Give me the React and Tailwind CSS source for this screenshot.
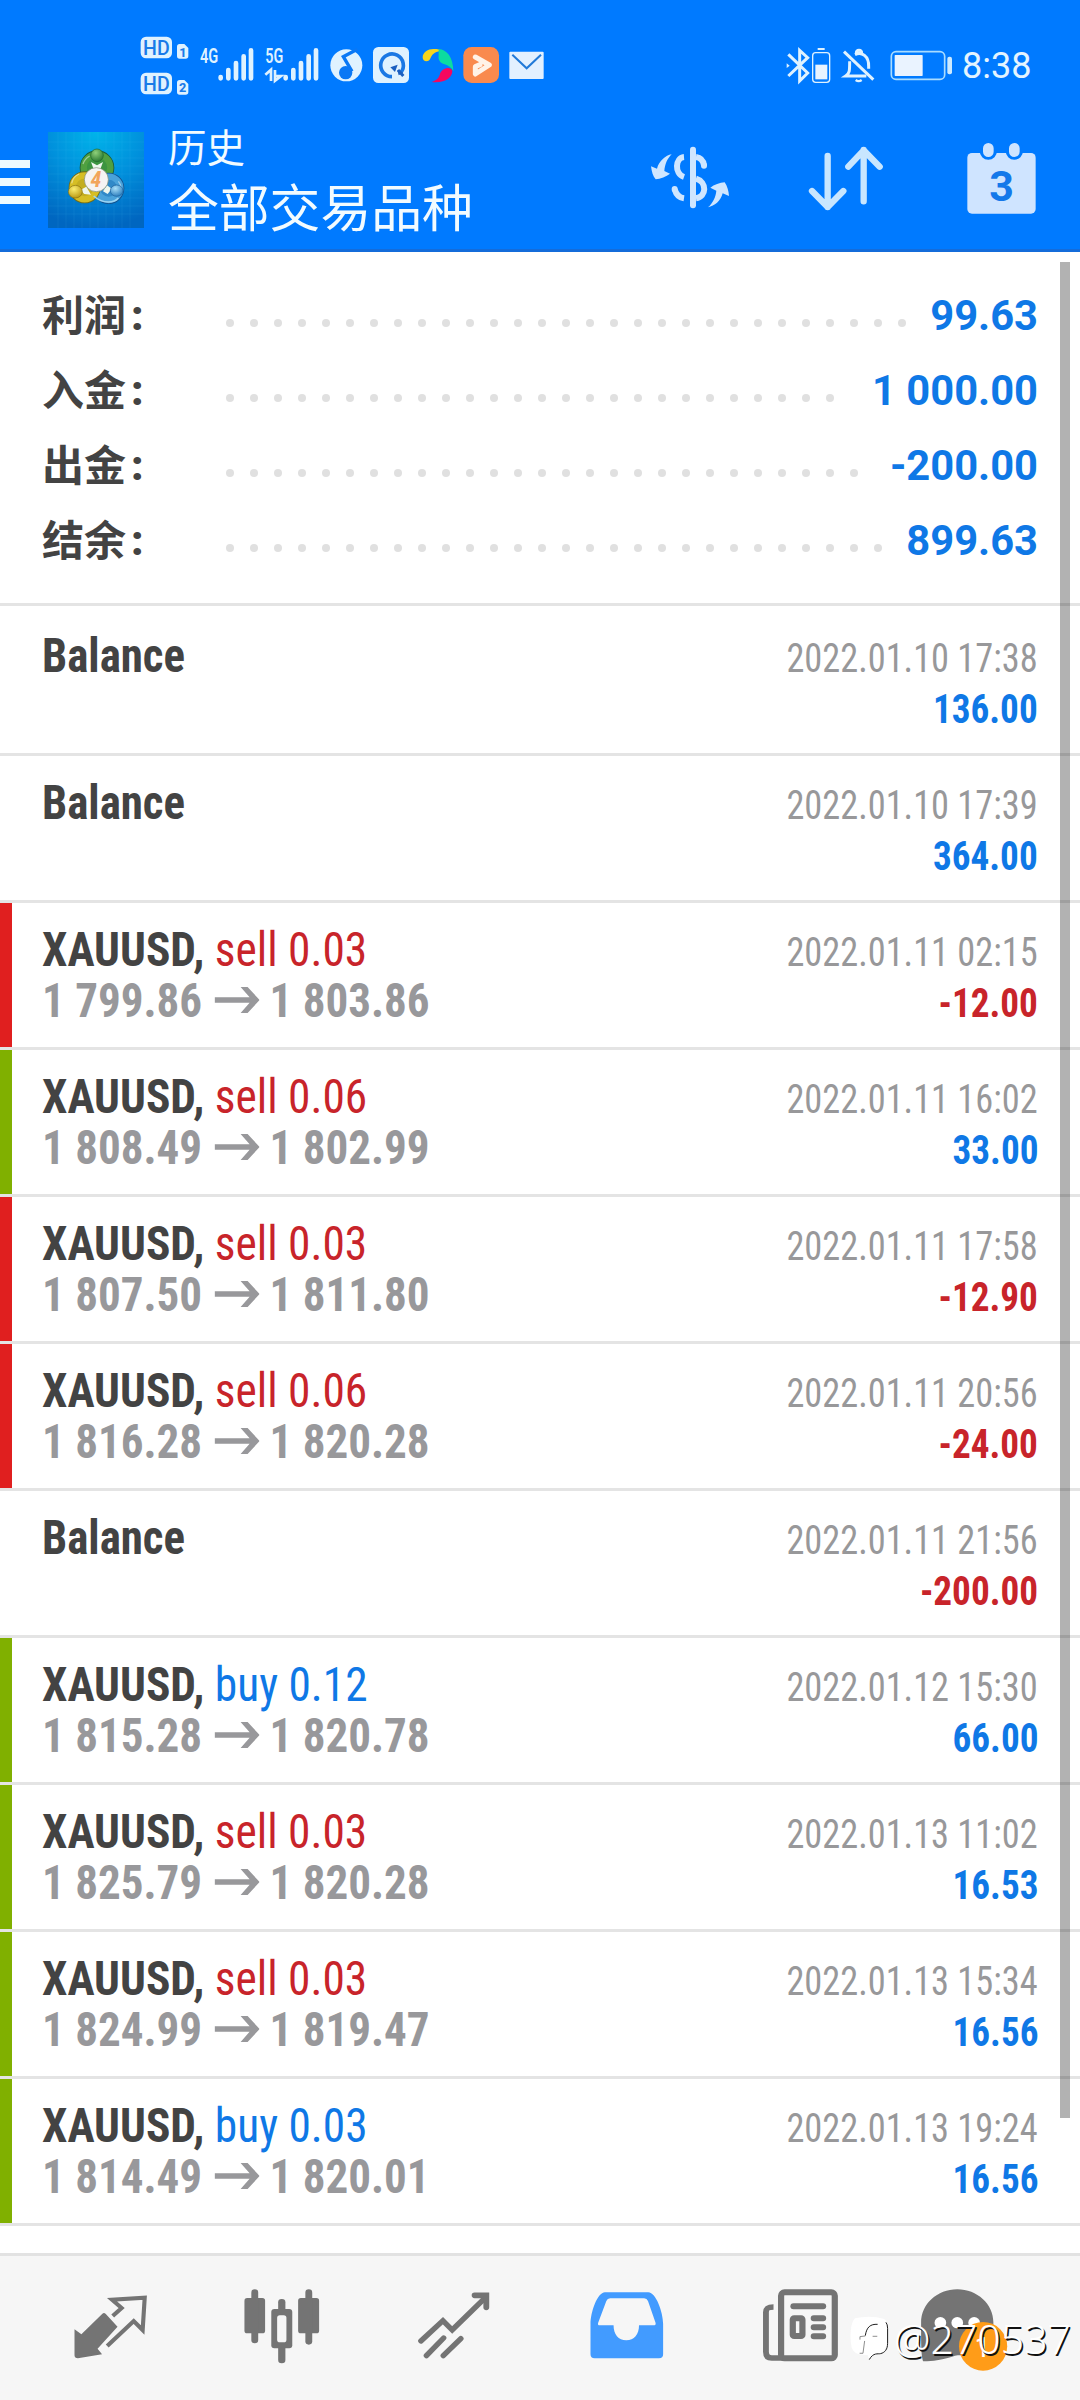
const summary = [
  { label: "利润", value: "99.63", dots: 29 },
  { label: "入金", value: "1 000.00", dots: 26 },
  { label: "出金", value: "-200.00", dots: 27 },
  { label: "结余", value: "899.63", dots: 28 },
]

const deals = [
  { date: "2022.01.10 17:38", profit: "136.00" },
  { date: "2022.01.10 17:39", profit: "364.00" },
  { type: "sell", volume: "0.03", open: "1 799.86", close: "1 803.86", date: "2022.01.11 02:15", profit: "-12.00" },
  { type: "sell", volume: "0.06", open: "1 808.49", close: "1 802.99", date: "2022.01.11 16:02", profit: "33.00" },
  { type: "sell", volume: "0.03", open: "1 807.50", close: "1 811.80", date: "2022.01.11 17:58", profit: "-12.90" },
  { type: "sell", volume: "0.06", open: "1 816.28", close: "1 820.28", date: "2022.01.11 20:56", profit: "-24.00" },
  { date: "2022.01.11 21:56", profit: "-200.00" },
  { type: "buy", volume: "0.12", open: "1 815.28", close: "1 820.78", date: "2022.01.12 15:30", profit: "66.00" },
  { type: "sell", volume: "0.03", open: "1 825.79", close: "1 820.28", date: "2022.01.13 11:02", profit: "16.53" },
  { type: "sell", volume: "0.03", open: "1 824.99", close: "1 819.47", date: "2022.01.13 15:34", profit: "16.56" },
  { type: "buy", volume: "0.03", open: "1 814.49", close: "1 820.01", date: "2022.01.13 19:24", profit: "16.56" },
]

function SignalBars({ x }) {
  return (
    <g stroke="#dff2ff" strokeWidth="14" strokeLinecap="round">
      <path d={`M${x + 7} 171v4M${x + 30} 150v25M${x + 53} 129v46M${x + 76} 109v66M${x + 98} 91v84`} />
    </g>
  )
}

function StatusIcons() {
  return (
    <svg viewBox="0 0 1320 270" className="w-[440px] h-[90px] font-['Roboto']">
      {/* HD badges, one for each SIM */}
      <g fill="#dff2ff">
        <rect x="62" y="50" width="94" height="65" rx="16" />
        <rect x="62" y="158" width="94" height="65" rx="16" />
        <path d="M171 80q0-8 8-8h14l12 12v24q0 8-8 8h-18q-8 0-8-8zM171 188q0-8 8-8h14l12 12v24q0 8-8 8h-18q-8 0-8-8z" />
      </g>
      <g fill="#1a7be8" fontWeight="500">
        <text x="69" y="105" fontSize="62" textLength="80" lengthAdjust="spacingAndGlyphs">HD</text>
        <text x="69" y="213" fontSize="62" textLength="80" lengthAdjust="spacingAndGlyphs">HD</text>
        <text x="178" y="110" fontSize="38" fontWeight="800">1</text>
        <text x="177" y="217" fontSize="38" fontWeight="800">2</text>
      </g>
      <g fill="#dff2ff" fontSize="61" fontWeight="600">
        <text x="240" y="129" textLength="55" lengthAdjust="spacingAndGlyphs">4G</text>
        <text x="436" y="129" textLength="54" lengthAdjust="spacingAndGlyphs">5G</text>
      </g>
      <SignalBars x={295} />
      <SignalBars x={490} />
      <path d="M436 164l17-15v34M465 150v32l18-14h-14" fill="none" stroke="#dff2ff" strokeWidth="8" />

      {/* music player */}
      <circle cx="679" cy="136" r="48" fill="#dff2ff" />
      <path d="M712 88l-42 22 26 44" fill="none" stroke="#0a78f5" strokeWidth="10" />
      <circle cx="677" cy="158" r="20" fill="#0a78f5" />

      {/* cleaner */}
      <rect x="759" y="81" width="108" height="108" rx="16" fill="#dff2ff" />
      <path d="M842 158a34 34 0 1 0-26 12" fill="none" stroke="#1a78e4" strokeWidth="11" />
      <path d="M811 142l22-8-8 22zM832 150l18 8-14 8z" fill="#1a5fc0" />
      <path d="M834 150l16 18" stroke="#1a5fc0" strokeWidth="9" />

      {/* swirl */}
      <path d="M908 112c0-16 18-26 34-25 10 0 19 2 26 6-20 0-30 7-36 20-4 15-24 14-24-1z" fill="#f7d51d" />
      <path d="M956 88c22-1 44 22 44 66-6-12-15-18-26-21-14-4-20-14-18-26z" fill="#0cdba0" />
      <path d="M997 152c0 20-20 38-62 34 18-6 22-14 25-24 5-18 32-24 37-10z" fill="#f5085e" />

      {/* video player */}
      <rect x="1030" y="81" width="107" height="108" rx="25" fill="#f98a4e" />
      <path d="M1066 111l42 24-42 27v-22l14-6" fill="none" stroke="#fff3e8" strokeWidth="15" strokeLinecap="round" strokeLinejoin="round" />

      {/* mail */}
      <rect x="1168" y="95" width="103" height="82" rx="3" fill="#e3f0ff" />
      <path d="M1177 104l43 41 43-41" fill="none" stroke="#2179d8" strokeWidth="6" />
    </svg>
  )
}

function DeviceIcons() {
  return (
    <svg viewBox="74 0 510 270" className="w-[170px] h-[90px]">
      <g fill="none" stroke="#dff2ff" strokeWidth="9">
        <path d="M84 103l58 56-24 24V91l24 22-58 55" />
        <path d="M79 130v14l9-7z" fill="#dff2ff" stroke="none" />
        <rect x="157" y="98" width="51" height="89" rx="9" strokeWidth="4" />
        <path d="M172 87h21" strokeWidth="6" />
      </g>
      <rect x="165" y="134" width="36" height="44" fill="#e8f3ff" />
      {/* muted bell */}
      <g fill="none" stroke="#dff2ff" strokeWidth="9">
        <path d="M251 95l88 84" />
        <path d="M318 168h-62c12-8 12-14 12-44M284 104c20-10 42 4 41 36v6M288 100q0-9 8-9t8 9" />
        <path d="M286 180q9 7 18 0" strokeWidth="7" />
      </g>
      <rect x="393" y="95" width="160" height="83" rx="14" fill="none" stroke="#a9dcff" strokeWidth="5" />
      <rect x="403" y="105" width="84" height="63" rx="2" fill="#eaf3ff" />
      <rect x="561" y="110" width="14" height="53" rx="6" fill="#cdeaff" />
    </svg>
  )
}

function AppLogo() {
  return (
    <svg viewBox="53 36 288 288" className="w-24 h-24">
      <defs>
        <radialGradient id="sky" cx="0.5" cy="0" r="1">
          <stop offset="0" stopColor="#00b4ea" />
          <stop offset="0.5" stopColor="#0090dc" />
          <stop offset="1" stopColor="#0066c0" />
        </radialGradient>
        <radialGradient id="green" cx="0.4" cy="0.3" r="0.8">
          <stop offset="0" stopColor="#8fd07a" />
          <stop offset="1" stopColor="#20702a" />
        </radialGradient>
        <radialGradient id="yellow" cx="0.4" cy="0.3" r="0.8">
          <stop offset="0" stopColor="#fbee72" />
          <stop offset="1" stopColor="#b38f08" />
        </radialGradient>
        <radialGradient id="blue" cx="0.4" cy="0.3" r="0.8">
          <stop offset="0" stopColor="#a8def8" />
          <stop offset="1" stopColor="#1f74b8" />
        </radialGradient>
      </defs>
      <rect x="53" y="36" width="288" height="288" fill="url(#sky)" />
      <path
        d="M83 36v288M107 36v288M131 36v288M155 36v288M179 36v288M203 36v288M227 36v288M251 36v288M275 36v288M299 36v288M53 66h288M53 90h288M53 114h288M53 138h288M53 162h288M53 186h288M53 210h288M53 234h288M53 258h288M53 282h288"
        stroke="#5cc8f5"
        strokeOpacity="0.14"
        strokeWidth="2"
      />
      <circle cx="200" cy="143" r="40" fill="#2f8a3c" stroke="#1c5a3a" strokeWidth="24" />
      <circle cx="200" cy="143" r="40" fill="#3c9440" stroke="#4fa040" strokeWidth="19" />
      <circle cx="235" cy="205" r="35" fill="#2a7fc0" stroke="#14508c" strokeWidth="24" />
      <circle cx="235" cy="205" r="35" fill="#3189c8" stroke="#4aa2da" strokeWidth="19" />
      <circle cx="163" cy="202" r="36" fill="#b09a1c" stroke="#6f6a18" strokeWidth="24" />
      <circle cx="163" cy="202" r="36" fill="#c4ae20" stroke="#d6be24" strokeWidth="19" />
      <path
        d="M158 132a42 42 0 0 1 20-24M124 190a38 38 0 0 1 22-28M264 184a34 34 0 0 1 8 26"
        fill="none"
        stroke="#ffffff"
        strokeOpacity="0.45"
        strokeWidth="4"
      />
      <path d="M190 228q20 18 44 18 20 0 30-12" fill="none" stroke="#9bd4f2" strokeWidth="5" />
      <path d="M182 126l18 10 18-10-8 22h-20zM150 210l18-10 14 24-20-2zM230 196l14 10-12 16-14-8z" fill="#eef6ee" />
      <circle cx="200" cy="106" r="19" fill="url(#green)" stroke="#1f6a2c" strokeWidth="2" />
      <ellipse cx="135" cy="215" rx="21" ry="19" fill="url(#yellow)" stroke="#8a7210" strokeWidth="2" />
      <ellipse cx="259" cy="212" rx="19" ry="17" fill="url(#blue)" stroke="#1b5f9c" strokeWidth="2" />
      <circle cx="198" cy="179" r="36" fill="#f6f3f3" stroke="#7c8a70" strokeWidth="2" />
      <text x="197" y="202" textAnchor="middle" fontSize="66" fontWeight="700" fontStyle="italic" fill="#f2a45c" className="font-['Roboto_Condensed']">
        4
      </text>
    </svg>
  )
}

function SymbolIcon() {
  return (
    <svg viewBox="90 80 240 190" className="w-[80px] h-[63.33px]">
      <path d="M219 91v167" stroke="#cfe6ff" strokeWidth="18" strokeLinecap="round" />
      <g fill="none" stroke="#cfe6ff" strokeWidth="18">
        <path d="M192 113c-26 2-30 50 0 60M192 237c-14-2-23-10-28-27" />
        <path d="M164 210v-1M252 139v-1" strokeLinecap="round" />
        <path d="M228 113c14 2 22 12 24 25M228 178c34 10 32 54 0 59" />
      </g>
      <g fill="#cfe6ff">
        <path d="M155 105c-18 3-38 20-44 43l-18-7c2 16 6 30 14 39 14-2 32-8 43-17l-17-8c2-20 8-36 22-50z" />
        <path d="M264 264c20-4 38-18 44-42l19 8c-1-14-5-30-13-41-14 1-32 7-43 16l18 9c-2 20-10 36-25 50z" />
      </g>
    </svg>
  )
}

function SortIcon() {
  return (
    <svg viewBox="565 80 226 195" className="w-[75.33px] h-[65px]">
      <path
        d="M624 110v153M577 215l47 48 47-48M732 246V92M686 142l46-49 48 49"
        fill="none"
        stroke="#c8e6ff"
        strokeWidth="19"
        strokeLinecap="round"
        strokeLinejoin="round"
      />
    </svg>
  )
}

function CalendarIcon() {
  return (
    <svg viewBox="1040 65 212 222" className="w-[70.67px] h-[74px]">
      <rect x="1044" y="101" width="205" height="182" rx="14" fill="#cfe4ff" />
      <g stroke="#007aff" strokeWidth="52" strokeLinecap="round">
        <path d="M1107 87v8M1185 87v8" />
      </g>
      <g stroke="#cfe4ff" strokeWidth="32" strokeLinecap="round">
        <path d="M1107 87v10M1185 87v10" />
      </g>
      <text x="1147" y="244" textAnchor="middle" fontSize="129" fontWeight="700" fill="#1478ea" className="font-['Roboto']">
        3
      </text>
    </svg>
  )
}

function Header() {
  return (
    <header className="h-[252px] bg-[#007aff] border-b-[3px] border-[#146cda] text-[#f2fbff]">
      <div className="h-[108px] pt-5 pl-[120px] pr-[48px] flex justify-between">
        <StatusIcons />
        <div className="flex">
          <DeviceIcons />
          <div className="w-[77px] pl-[7px] pt-[25px] text-[36px] leading-[42px] text-[#e4f4ff] font-['Roboto'] whitespace-nowrap">8:38</div>
        </div>
      </div>
      <div className="flex items-start">
        <div className="mt-[52px] w-[30px] flex flex-col gap-[10px]">
          <span className="h-2 bg-[#eefaff]" />
          <span className="h-2 bg-[#eefaff]" />
          <span className="h-2 bg-[#eefaff]" />
        </div>
        <div className="mt-6 ml-[18px]">
          <AppLogo />
        </div>
        <div className="mt-[9px] ml-[24px] flex-1 font-['Noto_Sans_CJK_SC',sans-serif]">
          <div className="text-[38.5px] leading-[56px]">历史</div>
          <div className="text-[50.8px] leading-[65px]">全部交易品种</div>
        </div>
        <div className="flex items-start pr-[43px]">
          <div className="mt-[38px]"><SymbolIcon /></div>
          <div className="mt-[38px] ml-[78px]"><SortIcon /></div>
          <div className="mt-[33px] ml-[83px]"><CalendarIcon /></div>
        </div>
      </div>
    </header>
  )
}

function SummaryRow({ item }) {
  return (
    <div className="h-[75px] pl-[42px] pr-[42px] flex items-center">
      <div className="w-[184px] flex items-center text-[42px] leading-[75px] font-bold text-[#434343]">
        <span className="font-['Noto_Sans_CJK_SC',sans-serif] -mt-1.5">{item.label}</span>
        <span className="font-['Roboto'] font-black ml-[5px]">:</span>
      </div>
      <div className="flex gap-4 pt-[15px]">
        {Array.from({ length: item.dots }, (_, i) => (
          <span key={i} className="w-2 h-2 rounded-full bg-[#e0e0e0]" />
        ))}
      </div>
      <div className="flex-1 text-right text-[41.7px] leading-[75px] font-bold text-[#0f78e6] font-['Roboto'] whitespace-nowrap">
        {item.value}
      </div>
    </div>
  )
}

function DealRow({ deal, first }) {
  const loss = deal.profit.startsWith("-")

  const renderStripe = () => {
    if (!deal.type) return <div className="w-3" />
    return <div className={loss ? "w-3 bg-[#e01f1f]" : "w-3 bg-[#80b000]"} />
  }

  return (
    <div className={`flex border-b-[3px] border-[#e4e4e4] ${first ? "h-[150px]" : "h-[147px]"}`}>
      {renderStripe()}
      <div className={`flex-1 pl-[30px] pr-[42px] font-['Roboto_Condensed'] ${first ? "pt-6" : "pt-[21px]"}`}>
        <div className="h-[51px] flex justify-between items-baseline leading-[51px]">
          <div className={`text-[48px] whitespace-nowrap origin-left ${deal.type ? "scale-x-[0.945]" : "scale-x-[0.935]"}`}>
            <span className="font-bold text-[#434343]">{deal.type ? "XAUUSD, " : "Balance"}</span>
            {deal.type && (
              <span className={deal.type === "sell" ? "text-[#c8242a]" : "text-[#0f78e6]"}>
                {deal.type} {deal.volume}
              </span>
            )}
          </div>
          <div className="text-[40px] text-[#98989a] whitespace-nowrap origin-right scale-x-[0.908]">{deal.date}</div>
        </div>
        <div className="h-[51px] flex justify-between items-baseline leading-[51px]">
          <div className="text-[48px] font-bold text-[#98989b] whitespace-nowrap flex items-baseline origin-left scale-x-[0.938]">
            {deal.type && (
              <>
                <span>{deal.open}</span>
                <svg viewBox="0 0 45 26" preserveAspectRatio="none" className="w-[48px] h-[26px] ml-[13px] mr-[11px] relative -top-1">
                  <path d="M0 10.3h35L26 0h7l12 13-12 13h-7l9-10.300H0z" fill="#98989b" />
                </svg>
                <span>{deal.close}</span>
              </>
            )}
          </div>
          <div
            className={`text-[40px] font-bold origin-right scale-x-[0.93] ${deal.type ? "" : "pt-[3px]"} ${
              loss ? "text-[#c8242a]" : "text-[#0f78e6]"
            }`}
          >
            {deal.profit}
          </div>
        </div>
      </div>
    </div>
  )
}

function BottomNav() {
  return (
    <nav className="relative h-[147px] bg-[#f6f6f6] border-t-[3px] border-[#e2e2e2] px-6 pt-[31px] flex items-start">
      {/* quotes */}
      <div className="flex-1 flex justify-center">
        <svg viewBox="199 320 240 255" preserveAspectRatio="none" className="w-[82.6px] h-[85px]">
          <path d="M215 447l20 15 61-62q5-4 10 1l34 38-58 66 13 17-70 12q-10 0-10-9z" fill="#747474" />
          <path d="M326 407l26-24-28-25 95-6-6 97-26-27-77 75" fill="none" stroke="#747474" strokeWidth="12" />
        </svg>
      </div>
      {/* charts */}
      <div className="flex-1 flex justify-center">
        <svg viewBox="699 320 240 255" preserveAspectRatio="none" className="w-[82.6px] h-[85px]">
          <g fill="#747474">
            <rect x="709" y="353" width="60" height="106" rx="8" />
            <rect x="865" y="353" width="61" height="106" rx="8" />
            <rect x="729" y="327" width="20" height="162" rx="10" />
            <rect x="886" y="327" width="20" height="166" rx="10" />
            <rect x="807" y="356" width="21" height="193" rx="10" />
            <rect x="787" y="386" width="61" height="118" rx="9" />
          </g>
          <rect x="804" y="405" width="27" height="81" rx="8" fill="#f6f6f6" />
        </svg>
      </div>
      {/* trade */}
      <div className="flex-1 flex justify-center">
        <svg viewBox="1198 320 240 255" preserveAspectRatio="none" className="w-[82.6px] h-[85px]">
          <g fill="none" stroke="#747474" strokeWidth="16" strokeLinecap="round">
            <path d="M1221 482l64-61 27 28 97-98" />
            <path d="M1377 345h34v36" strokeWidth="17" />
            <path d="M1237 526l50-53M1286 526l51-51" />
          </g>
        </svg>
      </div>
      {/* history, the open tab */}
      <div className="flex-1 flex justify-center">
        <svg viewBox="130 320 240 255" preserveAspectRatio="none" className="w-[82.6px] h-[85px]">
          <path
            fillRule="evenodd"
            d="M188 336h126c22 0 43 60 43 95v91q0 12-12 12H158q-12 0-12-12v-91c0-35 20-95 42-95zM203 354q-8 0-11 8l-24 66q-2 7 5 7h40c0 28 14 45 37 45s37-17 37-45h42q8 0 6-8l-22-65q-3-8-11-8z"
            fill="#429bff"
          />
        </svg>
      </div>
      {/* news */}
      <div className="flex-1 flex justify-center">
        <svg viewBox="629 320 240 255" preserveAspectRatio="none" className="w-[82.6px] h-[85px]">
          <g fill="none" stroke="#747474">
            <rect x="699" y="336" width="156" height="198" rx="10" strokeWidth="18" />
            <path d="M677 380c-14 0-22 2-22 16v118q0 19 17 19h30" strokeWidth="17" />
            <path d="M735 378h86" strokeWidth="18" strokeLinecap="round" />
            <path d="M794 414h27M794 441h27M794 468h27" strokeWidth="18" strokeLinecap="round" />
            <rect x="733" y="414" width="28" height="53" rx="4" strokeWidth="18" />
          </g>
        </svg>
      </div>
      {/* messages */}
      <div className="flex-1 flex justify-center">
        <svg viewBox="1099 320 300 255" preserveAspectRatio="none" className="w-[103.3px] h-[85px]">
          <path d="M1213 327c58 0 105 44 105 100s-45 98-100 98c-20 0-40 18-104 18-6-20-6-50-6-116 0-56 47-100 105-100z" fill="#747474" />
          <g fill="#ffffff">
            <circle cx="1164" cy="427" r="17" />
            <circle cx="1213" cy="427" r="17" />
            <circle cx="1262" cy="427" r="17" />
          </g>
          <ellipse cx="1288" cy="498" rx="70" ry="73" fill="#ff9c18" />
          <text x="1287" y="530" textAnchor="middle" fontSize="84" fill="#ffffff" className="font-['Roboto']">
            1
          </text>
        </svg>
      </div>

      {/* author mark over the bar */}
      <div className="absolute right-[9px] top-[54px] flex items-center gap-[4px]">
        <svg viewBox="32 120 122 140" className="w-[40.6px] h-[46.6px]">
          <path
            d="M50 130q46-10 88 2c9 8 11 18 10 40 0 36-6 58-22 64-12 2-20 4-33 18l-5-14c-24 2-42-4-48-22-6-32-4-76 10-88z"
            fill="#ffffff"
          />
          <path d="M143 142q5 6 5 18v45c0 18-8 28-21 31-8 2-22-4-34 18" fill="none" stroke="#1c1c1c" strokeWidth="3" />
          <path d="M118 148c-22-1-33 8-37 34" fill="none" stroke="#1c1c1c" strokeWidth="3" />
          <path d="M65 194v-9l16-2M79 198l-5 37h-10M103 184h14" fill="none" stroke="#777777" strokeWidth="2.500" />
        </svg>
        <span className="text-[41px] leading-[56px] font-light text-white font-['Noto_Sans'] [text-shadow:1.5px_1.5px_0_#111]">@270537</span>
      </div>
    </nav>
  )
}

export default function App() {
  return (
    <div className="relative w-[1080px] h-[2400px] bg-white overflow-hidden flex flex-col">
      <Header />
      <main className="relative flex-1 min-h-0 overflow-hidden">
        <section className="h-[354px] pt-[26px] border-b-[3px] border-[#e4e4e4]">
          {summary.map((item) => (
            <SummaryRow key={item.label} item={item} />
          ))}
        </section>
        {deals.map((deal, i) => (
          <DealRow key={deal.date} deal={deal} first={i === 0} />
        ))}
        {/* next deal, only its top edge is in view */}
        <div className="pl-[42px] pt-[21px] text-[48px] leading-[51px] font-bold text-[#434343] font-['Roboto_Condensed']">
          <div className="origin-left scale-x-[0.935]">Balance</div>
        </div>
        <div className="absolute right-[10px] top-[10px] w-[10px] h-[1856px] bg-black/30" />
      </main>
      <BottomNav />
    </div>
  )
}
